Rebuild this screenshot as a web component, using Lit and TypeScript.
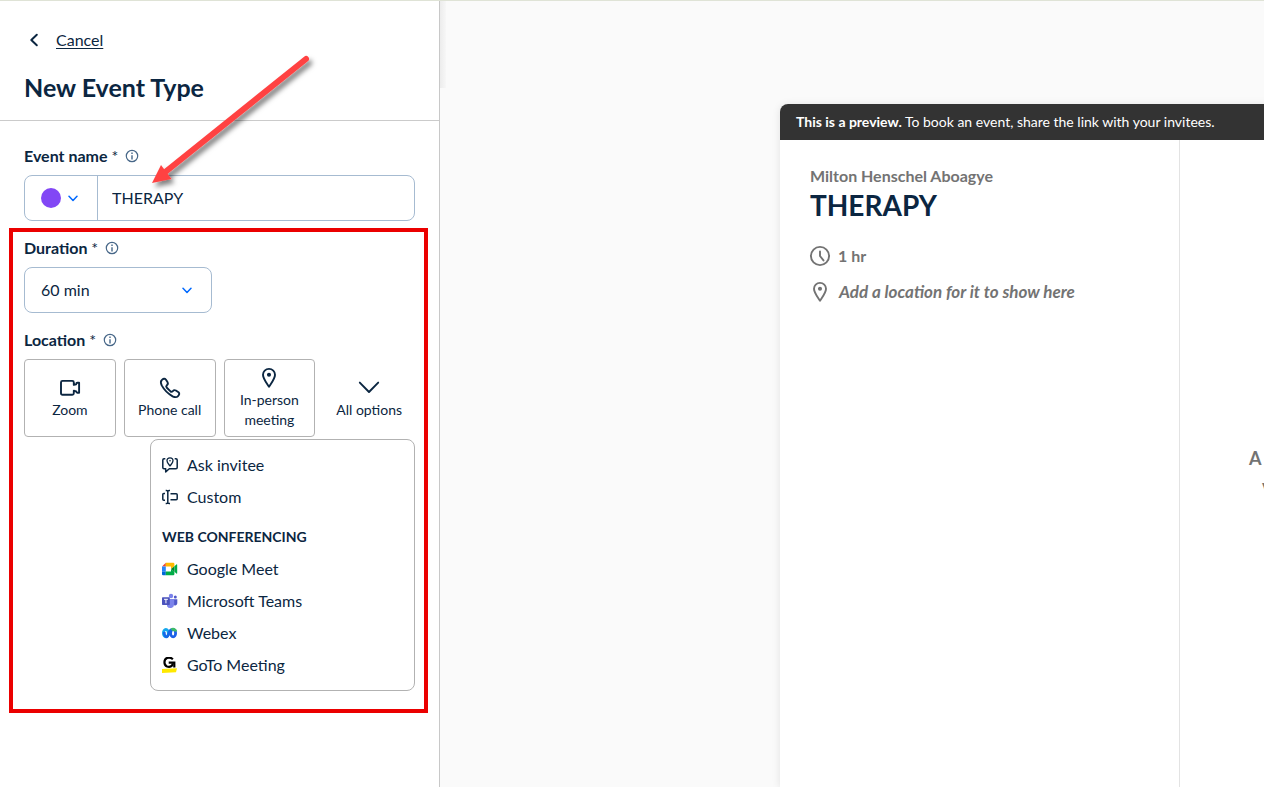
import { LitElement, html, css, svg } from "lit";
import { customElement, state } from "lit/decorators.js";

const chevronDown = html`<svg class="chevron" viewBox="0 0 10 7" width="10" height="7" fill="none" stroke="currentColor" stroke-width="1.5" stroke-linecap="round" stroke-linejoin="round" aria-hidden="true"><path d="M1 1.2 5 5.4 9 1.2" /></svg>`;

const infoGlyph = html`<svg viewBox="0 0 14 14" width="14" height="14" fill="none" stroke="currentColor" aria-hidden="true">
  <circle cx="7" cy="7" r="5.7" stroke-width="1.2" />
  <path d="M7 6.2v4.200M7 3.6v1.4" stroke-width="1.4" />
</svg>`;

const pinShape = svg`<path d="M12 2.9c-3.4 0-6 2.6-6 5.9 0 3.900 3.400 7.900 6 12 2.600-4.100 6-8.100 6-12 0-3.300-2.600-5.900-6-5.900Z" /><circle cx="12" cy="8.800" r="1.100" fill="currentColor" />`;

const strokeIcon = (body: unknown) => html`<svg viewBox="0 0 24 24" width="24" height="24" fill="none" stroke="currentColor" stroke-width="1.9" stroke-linecap="round" stroke-linejoin="round" aria-hidden="true">${body}</svg>`;

const cameraIcon = strokeIcon(svg`<path d="M4.500 4.900h9.800q1.500 0 1.500 1.500v2.500l2.400-.6q0-1.500 1.200-1.500h1.700v10h-1.700q-1.200 0-1.200-1.500l-2.400-.6v2.500q0 1.500-1.500 1.500H4.500Q3 18.700 3 17.200V6.400q0-1.500 1.500-1.500Z" />`);
const phoneIcon = strokeIcon(svg`<path d="M14.600 20.300A28 28 0 0 1 3.700 9.400C2.700 7.100 2.400 5.300 3.700 4.200 5.300 2.600 6.700 2.200 7.800 3.500L9.500 6.100C10.300 7.500 10 8.300 8.900 9.200 8 10 7.900 10.600 8.600 11.500L12.500 15.400C13.400 16.100 14 16 14.800 15.100 15.700 14 16.500 13.700 17.900 14.500L20.500 16.200C21.800 17.300 21.400 18.700 19.800 20.300 18.600 21.500 16.900 21.400 14.600 20.300Z" />`);
const pinIcon = strokeIcon(pinShape);
const wideChevron = strokeIcon(svg`<path d="M2.800 6.600 12 16 21.200 6.600" />`);

const askIcon = html`<svg viewBox="0 0 16 16" width="16" height="16" fill="none" stroke="currentColor" stroke-width="1.500" stroke-linejoin="round" aria-hidden="true">
  <path d="M3.300 1.800H2q-1.200 0-1.200 1.200v7.500q0 1.200 1.200 1.200h1.700v3.200l3.600-3.200H14q1.200 0 1.200-1.200V3q0-1.200-1.200-1.200h-1.300" />
  <path d="M8 .8C6.300.8 5 2 5 3.700 5 5.700 6.800 7.300 8 9c1.200-1.700 3-3.300 3-5.300C11 2 9.700.8 8 .8Z" stroke-width="1.300" /><circle cx="8" cy="3.800" r=".8" fill="currentColor" stroke="none" />
</svg>`;
const customIcon = html`<svg viewBox="0 0 16 16" width="16" height="16" fill="none" stroke="currentColor" stroke-width="1.500" aria-hidden="true">
  <path d="M3 4.500H1.800Q.8 4.500.8 5.500v4.800q0 1 1 1H3M8.500 4.800h5.700q1 0 1 1v4q0 1-1 1H8.500" />
  <path d="M3.700 1.500H4.500q1.300 0 1.300 1v11q0 1-1.300 1h-.8M8 1.500h-.9q-1.300 0-1.300 1v11q0 1 1.300 1H8" />
</svg>`;
const meetIcon = html`<svg viewBox="0 0 16 16" width="16" height="16" aria-hidden="true">
  <path fill="#ea4335" d="M0 5.500 3.800 1.800v3.700Z" />
  <path fill="#2684fc" d="M0 5.500h3.800v5H0Z" />
  <path fill="#0066da" d="M0 10.500h3.800v3.800H1.100Q0 14.300 0 13.200Z" />
  <path fill="#ffba00" d="M3.800 1.800h7.400q1.200 0 1.200 1.200v2.300L9 8V5.500H3.800Z" />
  <path fill="#00ac47" d="M3.800 10.500H9V8l3.400 2.800v2.300q0 1.200-1.200 1.200H3.800Z" />
  <path fill="#00832d" d="M9 8l3.400-2.800v5.600Z" />
  <path fill="#00ac47" d="m12.400 5.200 2-1.700q.8-.5.8.4v8.200q0 .9-.8.4l-2-1.700Z" />
</svg>`;
const teamsIcon = html`<svg viewBox="0 0 16 16" width="16" height="16" aria-hidden="true">
  <circle cx="13.300" cy="4" r="1.500" fill="#5059c9" /><path fill="#5059c9" d="M11.500 6.300h3.800v4a2.400 2.400 0 0 1-3.800 1.800Z" />
  <circle cx="9" cy="3" r="2.200" fill="#7b83eb" /><path fill="#7b83eb" d="M5 6h7.200v5.300a3.900 3.900 0 0 1-7.200 1.900Z" />
  <rect x="0" y="4.200" width="7.800" height="7.800" rx=".7" fill="#4b53bc" />
  <path d="M2 6.300h3.900M3.950 6.300v4" stroke="#fff" stroke-width="1" />
</svg>`;
const webexIcon = html`<svg viewBox="0 0 16 16" width="16" height="16" fill="none" aria-hidden="true">
  <ellipse cx="3.900" cy="8.200" rx="2.500" ry="3.700" stroke="#14a7ed" stroke-width="2.800" />
  <ellipse cx="11.100" cy="8.200" rx="2.500" ry="3.700" stroke="#1d60e8" stroke-width="2.800" />
  <path d="M2.200 7c.2 3 1.200 4.900 2.500 4.900C6.600 11.900 7 5 9.500 4.700" stroke="#1767e7" stroke-width="2.700" />
  <path d="M9.400 4.900c1.400-1.200 4-.6 4.500 1.600" stroke="#3dbb68" stroke-width="2.800" />
</svg>`;
const gotoIcon = html`<svg viewBox="0 0 16 16" width="16" height="16" fill="none" aria-hidden="true">
  <path d="M10.900 2.300C9.100.6 6.800.2 5 1 1.600 2.500 1.600 8.100 5 9.500c3.300 1.100 5.700-.6 5.700-3.300" stroke="#000" stroke-width="2.200" />
  <path d="M6.700 5.700h5.600v4.800" stroke="#000" stroke-width="2.200" />
  <path fill="#ffe900" d="M0 12.100 15 11.300l-1 4L0 15.900Z" />
</svg>`;

@customElement("app-root")
export class AppRoot extends LitElement {
  @state() private eventName = "THERAPY";
  @state() private menuOpen = true;

  static styles = css`
    :host {
      display: block;
      font-family: Lato, "Liberation Sans", sans-serif;
      font-size: 16px;
      line-height: 22px;
      color: #0b2641;
    }
    * { box-sizing: border-box; }
    button, input, select { font: inherit; color: inherit; }
    button { background: none; border: 0; padding: 0; cursor: pointer; }
    svg { display: block; flex: none; }
    .page {
      display: grid;
      grid-template-columns: 440px minmax(0, 1fr);
      height: 100vh;
      overflow: hidden;
      border-top: 1px solid #dfe3d6;
      background: #fafafa;
    }
    .sidebar {
      position: relative;
      background: #fff;
      border-right: 1px solid #c8c8c8;
    }
    .head {
      padding: 24px 24px 17px;
      border-bottom: 1px solid #cbcbcb;
    }
    .back {
      display: flex;
      align-items: center;
      gap: 16px;
      height: 30px;
      padding-left: 5px;
    }
    .back a { color: inherit; text-decoration: underline; text-underline-offset: 2px; }
    h1 { margin: 16px 0 0; font-size: 25px; line-height: 32px; font-weight: 700; }
    .form {
      display: flex;
      flex-direction: column;
      gap: 16px;
      padding: 24px;
    }
    .field { display: flex; flex-direction: column; gap: 8px; min-width: 0; margin: 0; }
    .caption { display: flex; align-items: center; gap: 7px; }
    .caption label { font-weight: 700; }
    .star { font-weight: 400; }
    .info { color: #476788; }
    .name-box {
      display: flex;
      height: 46px;
      border: 1px solid #a6bbd1;
      border-radius: 8px;
    }
    .color {
      display: flex;
      align-items: center;
      gap: 7px;
      padding: 0 19px 0 16px;
      border-right: 1px solid #a6bbd1;
    }
    .dot { width: 20px; height: 20px; border-radius: 50%; background: #8247f5; }
    .chevron { color: #0069ff; }
    .name-box input {
      flex: 1;
      min-width: 0;
      border: 0;
      outline: 0;
      padding: 0 14px;
      background: none;
    }
    .select { display: grid; align-items: center; width: 188px; }
    .select > * { grid-area: 1 / 1; }
    .select select {
      width: 100%;
      height: 46px;
      padding: 0 16px;
      border: 1px solid #a6bbd1;
      border-radius: 8px;
      background: none;
      appearance: none;
    }
    .select .chevron { justify-self: end; margin-right: 20px; pointer-events: none; }
    .picker { position: relative; }
    .tiles { display: grid; grid-template-columns: repeat(4, 1fr); gap: 8px; }
    .tile {
      display: flex;
      flex-direction: column;
      align-items: center;
      justify-content: center;
      height: 78px;
      border: 1px solid #b2b2b2;
      border-radius: 4px;
      font-size: 14px;
      line-height: 20px;
    }
    .tile.plain { border-color: transparent; white-space: nowrap; }
    .menu {
      position: absolute;
      top: 80px;
      right: 0;
      width: 265px;
      height: 252px;
      padding: 9px 11px;
      border: 1px solid #b2b2b2;
      border-radius: 8px;
      background: #fff;
    }
    .item { display: flex; align-items: center; gap: 9px; width: 100%; height: 32px; text-align: left; }
    .menu h2 { margin: 8px 0 0; font-size: 14px; line-height: 32px; font-weight: 700; }
    .frame {
      position: absolute;
      top: 227px;
      left: 9px;
      width: 419px;
      height: 485px;
      border: 4px solid #eb0000;
      pointer-events: none;
    }
    .arrow { position: absolute; top: 44px; left: 140px; pointer-events: none; }
    .stage { position: relative; padding: 103px 0 0 340px; overflow: hidden; }
    .edge {
      position: absolute;
      top: 0;
      left: 0;
      width: 6px;
      height: 87px;
      background: linear-gradient(90deg, #ececec, #f7f7f7);
    }
    .card {
      display: flex;
      flex-direction: column;
      width: 800px;
      height: 100%;
      border-radius: 8px 8px 0 0;
      background: #fff;
      box-shadow: 0 1px 8px rgba(0, 0, 0, 0.1);
    }
    .notice {
      padding: 7px 16px;
      border-radius: 8px 8px 0 0;
      background: #333;
      color: #fff;
      font-size: 14px;
    }
    .columns { display: grid; grid-template-columns: 400px 1fr; flex: 1; }
    .details {
      padding: 25px 30px;
      border-right: 1px solid #e3e3e3;
      color: #737373;
      font-weight: 700;
    }
    .details p { margin: 0; }
    .details h2 { margin: 0 0 15px; font-size: 28px; line-height: 36px; color: #0b2641; }
    .fact { display: flex; align-items: center; gap: 8px; height: 36px; }
    .fact svg { margin: 0 -2px; }
    .fact em { padding-left: 1px; font-size: 17px; }
    .hint {
      padding: 304px 0 0 69px;
      color: #737373;
      font-size: 18px;
      line-height: 28px;
      font-weight: 700;
    }
    .hint p { margin: 0; }
    .hint .next { padding-left: 13px; }
  `;

  private caption(text: string, target: string) {
    return html`<div class="caption">
      <label for=${target}>${text} <span class="star">*</span></label>
      <button class="info" type="button" aria-label="About ${text}">${infoGlyph}</button>
    </div>`;
  }

  private item(icon: unknown, text: string) {
    return html`<button type="button" class="item">${icon}<span>${text}</span></button>`;
  }

  render() {
    return html`
      <div class="page">
        <aside class="sidebar">
          <header class="head">
            <div class="back">
              <svg viewBox="0 0 11 14" width="11" height="14" fill="none" stroke="currentColor" stroke-width="2" stroke-linecap="round" stroke-linejoin="round" aria-hidden="true"><path d="M7.800 1.800 2.300 7l5.500 5.200" /></svg>
              <a href="#">Cancel</a>
            </div>
            <h1>New Event Type</h1>
          </header>
          <form class="form" @submit=${(e: Event) => e.preventDefault()}>
            <div class="field">
              ${this.caption("Event name", "event-name")}
              <div class="name-box">
                <button type="button" class="color" aria-label="Event color"><span class="dot"></span>${chevronDown}</button>
                <input id="event-name" type="text" .value=${this.eventName}
                  @input=${(e: Event) => (this.eventName = (e.target as HTMLInputElement).value)} />
              </div>
            </div>
            <div class="field">
              ${this.caption("Duration", "duration")}
              <div class="select">
                <select id="duration"><option>60 min</option></select>
                ${chevronDown}
              </div>
            </div>
            <div class="field">
              ${this.caption("Location", "location-zoom")}
              <div class="picker">
                <div class="tiles">
                  <button type="button" class="tile" id="location-zoom">${cameraIcon}Zoom</button>
                  <button type="button" class="tile">${phoneIcon}Phone call</button>
                  <button type="button" class="tile">${pinIcon}In-person meeting</button>
                  <button type="button" class="tile plain" @click=${() => (this.menuOpen = !this.menuOpen)}>${wideChevron}All options</button>
                </div>
                ${this.menuOpen
                  ? html`<div class="menu">
                      ${this.item(askIcon, "Ask invitee")}
                      ${this.item(customIcon, "Custom")}
                      <h2>WEB CONFERENCING</h2>
                      ${this.item(meetIcon, "Google Meet")}
                      ${this.item(teamsIcon, "Microsoft Teams")}
                      ${this.item(webexIcon, "Webex")}
                      ${this.item(gotoIcon, "GoTo Meeting")}
                    </div>`
                  : ""}
              </div>
            </div>
          </form>
          <div class="frame"></div>
          <svg class="arrow" viewBox="140 45 190 160" width="190" height="160" aria-hidden="true">
            <defs><filter id="shade" x="-20%" y="-20%" width="150%" height="150%"><feDropShadow dx="3" dy="4" stdDeviation="2.500" flood-color="#000" flood-opacity=".5" /></filter></defs>
            <g filter="url(#shade)">
              <path d="M306 59 164 173" stroke="#ff4343" stroke-width="6" stroke-linecap="round" />
              <path d="M152 183 161 165 171.500 179Z" fill="#ff4343" />
            </g>
          </svg>
        </aside>
        <main class="stage">
          <div class="edge"></div>
          <section class="card">
            <div class="notice"><strong>This is a preview.</strong> To book an event, share the link with your invitees.</div>
            <div class="columns">
              <div class="details">
                <p>Milton Henschel Aboagye</p>
                <h2>${this.eventName}</h2>
                <div class="fact">
                  <svg viewBox="0 0 24 24" width="24" height="24" fill="none" stroke="currentColor" stroke-width="1.900" stroke-linecap="round" aria-hidden="true"><circle cx="12" cy="12" r="9.100" /><path d="M12 7.500V12l3.500 4.400" /></svg>
                  <span>1 hr</span>
                </div>
                <div class="fact">${pinIcon}<em>Add a location for it to show here</em></div>
              </div>
              <div class="hint"><p>A</p><p class="next">v</p></div>
            </div>
          </section>
        </main>
      </div>
    `;
  }
}
